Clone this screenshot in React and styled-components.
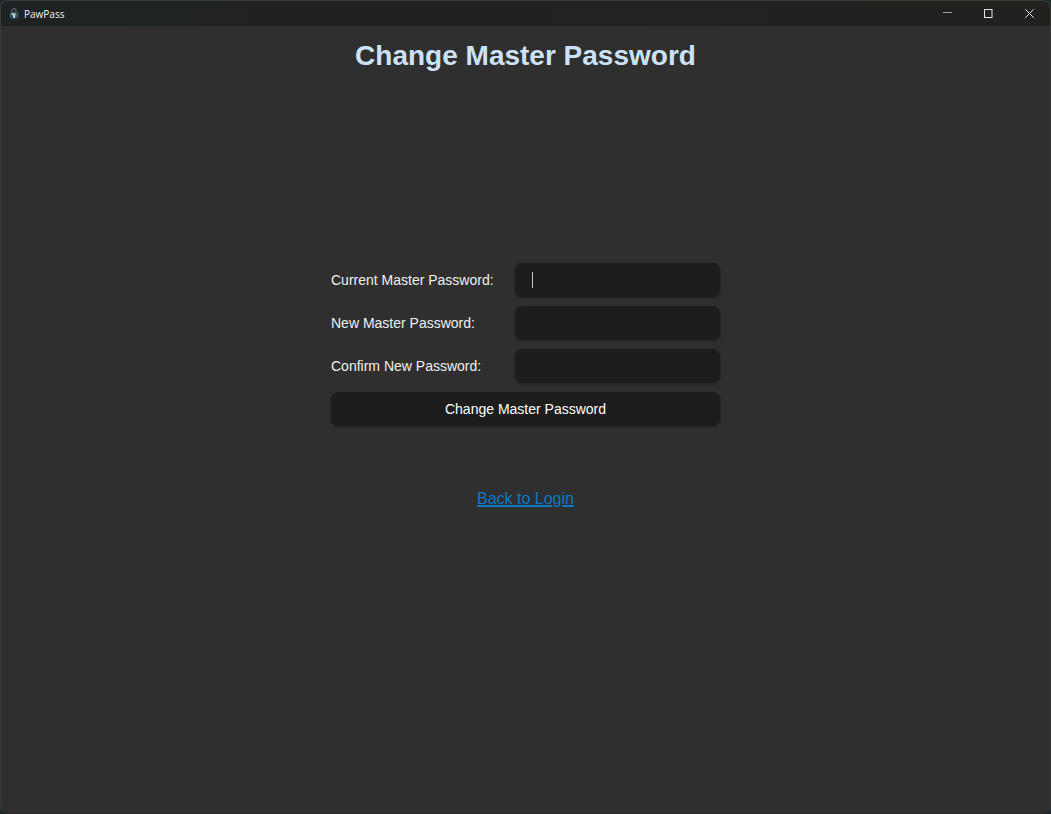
import React from "react";
import styled, { createGlobalStyle } from "styled-components";

const Global = createGlobalStyle`
  * { box-sizing: border-box; }
  body { margin: 0; background: #20272b; font-family: "Liberation Sans", Arial, sans-serif; }
`;

const Window = styled.div`
  display: flex;
  flex-direction: column;
  min-height: 100vh;
  overflow: hidden;
  background: #2f2f2f;
  border: 1px solid #363a3c;
  border-bottom-color: #2a2527;
  border-radius: 8px;
`;

const TitleBar = styled.header`
  display: flex;
  align-items: center;
  height: 25px;
  padding-left: 8px;
  background: linear-gradient(90deg, #1f2223, #21211f);
`;

const AppName = styled.span`
  flex: 1;
  margin-left: 5px;
  color: #f2f2f2;
  font: 10px/14px "Open Sans", "Noto Sans", sans-serif;
`;

const WindowButton = styled.button`
  display: flex;
  align-items: center;
  justify-content: center;
  width: 41px;
  height: 24px;
  padding: 0;
  border: 0;
  background: transparent;
  color: ${(p) => (p.$dim ? "#a0a09e" : "#e4e4e2")};
`;

const Main = styled.main`
  display: flex;
  flex-direction: column;
  align-items: center;
  padding: 14px 16px 16px;
`;

const Title = styled.h1`
  margin: 0;
  color: #cce2f8;
  font-size: 28px;
  line-height: 32px;
  font-weight: 700;
`;

const Form = styled.form`
  display: grid;
  grid-template-columns: 184px 205px;
  row-gap: 9px;
  align-items: center;
  margin-top: 191px;
`;

const Label = styled.label`
  color: #f0f0f0;
  font-size: 14px;
  line-height: 16px;
`;

const Field = styled.div`
  position: relative;
  display: flex;
`;

const Input = styled.input`
  width: 100%;
  height: 34px;
  padding: 0 16px;
  border: 0;
  border-radius: 7px;
  outline: 0;
  background: #1d1d1d;
  box-shadow: 0 1px 3px rgba(0, 0, 0, 0.3);
  color: #fff;
  font: inherit;
`;

const Caret = styled.span`
  position: absolute;
  top: 9px;
  left: 17px;
  width: 1px;
  height: 16px;
  background: #c8c8c8;
`;

const SubmitButton = styled.button`
  grid-column: 1 / -1;
  height: 34px;
  border: 0;
  border-radius: 7px;
  background: #1d1d1d;
  box-shadow: 0 1px 3px rgba(0, 0, 0, 0.3);
  color: #fff;
  font: 14px/16px "Liberation Sans", Arial, sans-serif;
`;

const BackLink = styled.a`
  margin-top: 64px;
  color: #0a78c8;
  font-size: 16px;
  line-height: 18px;
  text-decoration-thickness: 2px;
`;

const fields = [
  { id: "current", label: "Current Master Password:", active: true },
  { id: "new", label: "New Master Password:" },
  { id: "confirm", label: "Confirm New Password:" },
];

const Logo = () => (
  <svg width="10" height="12" viewBox="0 0 10 12" aria-hidden="true">
    <path d="M3 4V2.5a2 2 0 0 1 4 0V4" fill="none" stroke="#6b7a82" />
    <rect x="1" y="3.5" width="8" height="7.5" rx="2" fill="#2c4653" />
    <path d="M2.5 4.5L5 5.5l1.5-1v2.5L6 10H4V7.5L2.5 6.5z" fill="#b4cbd4" />
    <path d="M1.5 6v3M8.5 5v4" stroke="#567480" />
  </svg>
);

export default function App() {
  return (
    <>
      <Global />
      <Window>
        <TitleBar>
          <Logo />
          <AppName>PawPass</AppName>
          <WindowButton type="button" aria-label="Minimize" $dim>
            <svg width="9" height="9" viewBox="0 0 9 9" fill="none" stroke="currentColor">
              <path d="M0 3.5h9" />
            </svg>
          </WindowButton>
          <WindowButton type="button" aria-label="Maximize">
            <svg width="9" height="9" viewBox="0 0 9 9" fill="none" stroke="currentColor">
              <rect x="0.5" y="0.5" width="7.5" height="8" />
            </svg>
          </WindowButton>
          <WindowButton type="button" aria-label="Close">
            <svg width="9" height="9" viewBox="0 0 9 9" fill="none" stroke="currentColor">
              <path d="M0.3 0.3l8.4 8.4M8.7 0.3L0.3 8.7" />
            </svg>
          </WindowButton>
        </TitleBar>
        <Main>
          <Title>Change Master Password</Title>
          <Form onSubmit={(e) => e.preventDefault()}>
            {fields.map((f) => (
              <React.Fragment key={f.id}>
                <Label htmlFor={f.id}>{f.label}</Label>
                <Field>
                  <Input id={f.id} type="password" />
                  {f.active && <Caret />}
                </Field>
              </React.Fragment>
            ))}
            <SubmitButton type="submit">Change Master Password</SubmitButton>
          </Form>
          <BackLink href="#login">Back to Login</BackLink>
        </Main>
      </Window>
    </>
  );
}
